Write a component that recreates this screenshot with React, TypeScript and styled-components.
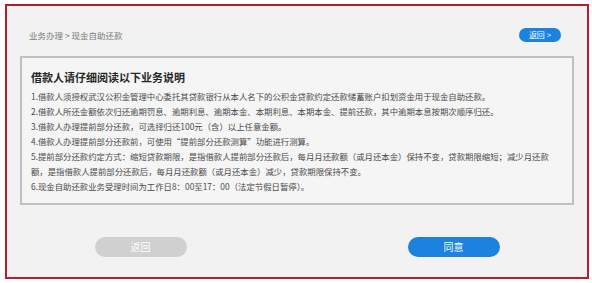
import React from "react";
import styled, { createGlobalStyle } from "styled-components";

const Global = createGlobalStyle`
  html, body { margin: 0; padding: 0; background: #ffffff; }
  body { font-family: "Noto Sans CJK SC", "Noto Sans", sans-serif; }
  * { box-sizing: border-box; }
`;

const Frame = styled.div`
  margin: 4px 0 0 5px;
  width: 584px;
  height: 275px;
  border: 2px solid #b12030;
  background: #f2f2f2;
  display: flex;
  flex-direction: column;
`;

const TopRow = styled.div`
  margin-top: 22px;
  height: 14px;
  padding: 0 26px 0 22px;
  display: flex;
  align-items: center;
  justify-content: space-between;
`;

const Crumb = styled.span`
  font-size: 8.5px;
  color: #7a7a7a;
  line-height: 14px;
`;

const PillButton = styled.button<{ $variant: "blue" | "gray"; $small?: boolean }>`
  border: none;
  margin: 0;
  padding: 0;
  font-family: inherit;
  color: #ffffff;
  border-radius: 999px;
  background: ${(p) => (p.$variant === "blue" ? "#1b82e0" : "#d0d0d0")};
  width: ${(p) => (p.$small ? "42px" : "92px")};
  height: ${(p) => (p.$small ? "14px" : "20px")};
  font-size: ${(p) => (p.$small ? "8px" : "10px")};
  line-height: 1;
  display: flex;
  align-items: center;
  justify-content: center;
  cursor: pointer;
`;

const Notice = styled.div`
  margin: 14px 13px 0 13px;
  height: 149px;
  border: 2px solid #c0c0c0;
  background: #f5f5f5;
  padding: 12px 8px 0 9px;
`;

const Title = styled.h2`
  margin: 0;
  font-size: 11px;
  line-height: 14px;
  font-weight: 700;
  color: #262626;
`;

const Body = styled.div`
  margin-top: 5px;
  display: flex;
  flex-direction: column;
`;

const Line = styled.p`
  margin: 0;
  font-size: 8.4px;
  line-height: 15px;
  color: #4a4a4a;
  white-space: nowrap;
`;

const Actions = styled.div`
  margin-top: 32px;
  display: flex;
  justify-content: center;
  gap: 221px;
`;

const lines = [
  "1.借款人须授权武汉公积金管理中心委托其贷款银行从本人名下的公积金贷款约定还款储蓄账户扣划资金用于现金自助还款。",
  "2.借款人所还金额依次归还逾期罚息、逾期利息、逾期本金、本期利息、本期本金、提前还款，其中逾期本息按期次顺序归还。",
  "3.借款人办理提前部分还款，可选择归还100元（含）以上任意金额。",
  "4.借款人办理提前部分还款前，可使用“提前部分还款测算”功能进行测算。",
  "5.提前部分还款约定方式：缩短贷款期限，是指借款人提前部分还款后，每月月还款额（或月还本金）保持不变，贷款期限缩短；减少月还款",
  "额，是指借款人提前部分还款后，每月月还款额（或月还本金）减少，贷款期限保持不变。",
  "6.现金自助还款业务受理时间为工作日8：00至17：00（法定节假日暂停）。",
];

export default function App() {
  return (
    <>
      <Global />
      <Frame>
        <TopRow>
          <Crumb>业务办理 &gt; 现金自助还款</Crumb>
          <PillButton $variant="blue" $small>返回 &gt;</PillButton>
        </TopRow>
        <Notice>
          <Title>借款人请仔细阅读以下业务说明</Title>
          <Body>
            {lines.map((l, i) => (
              <Line key={i}>{l}</Line>
            ))}
          </Body>
        </Notice>
        <Actions>
          <PillButton $variant="gray">返回</PillButton>
          <PillButton $variant="blue">同意</PillButton>
        </Actions>
      </Frame>
    </>
  );
}
